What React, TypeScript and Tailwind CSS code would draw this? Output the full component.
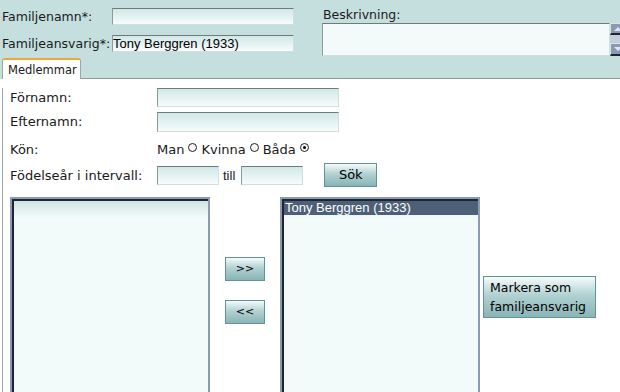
import React from "react";

const field =
  "border border-t-[#6f7b7b] border-l-[#8e9a9a] border-r-[#d4dede] border-b-[#d4dede] bg-linear-to-b from-[#d2e7e7] to-[#f6fcfc]";

const btn =
  "border border-[#5f9595] bg-linear-to-b from-[#f6fbfb] via-[#b2d1d2] via-45% to-[#8ab4b7] text-black";

function Radio({ checked = false }: { checked?: boolean }) {
  return (
    <span className="relative -top-[3px] mx-[4px] inline-flex h-[9px] w-[9px] shrink-0 items-center justify-center rounded-full border-[1.5px] border-[#222] bg-[#f6f6f6]">
      {checked && <span className="h-[3px] w-[3px] rounded-full bg-black" />}
    </span>
  );
}

function ListBox({ items = [] as string[], selected = -1 }) {
  return (
    <div className="h-[220px] w-[200px] shrink-0 border-2 border-[#8a9ab2]">
      <div className="h-full border-t-2 border-l-2 border-[#1e2632] bg-linear-to-b from-[#cfe4e4] from-0% to-[#f3fbfa] to-[8%]">
        {items.map((it, i) => (
          <div
            key={it}
            className={`h-[14px] pl-[1px] font-['Liberation_Sans'] text-[13px] leading-[14px] ${
              i === selected ? "bg-[#4e6078] text-white" : ""
            }`}
          >
            {it}
          </div>
        ))}
      </div>
    </div>
  );
}

export default function App() {
  return (
    <div className="h-[392px] w-[620px] overflow-hidden bg-white font-['DejaVu_Sans',sans-serif] text-[#1a1a1a]">
      <div className="flex h-[79px] flex-col bg-[#c4dfde]">
        <div className="flex h-[58px] overflow-hidden">
          <div className="w-[322px] shrink-0 pl-[2px] text-[12.5px]">
            <div className="mt-[8px] flex h-[17px] items-center">
              <span className="w-[110px] pt-[1px]">Familjenamn*:</span>
              <div className={`h-[17px] w-[182px] ${field}`} />
            </div>
            <div className="mt-[10px] flex h-[17px] items-center">
              <span className="w-[110px] pt-[1px]">Familjeansvarig*:</span>
              <div
                className={`h-[17px] w-[182px] ${field} font-['Liberation_Sans'] text-[13px] leading-[15px] text-black`}
              >
                Tony Berggren (1933)
              </div>
            </div>
          </div>
          <div className="shrink-0 text-[12.5px]">
            <div className="mt-[6px] h-[17px] pl-[1px]">Beskrivning:</div>
            <div className="flex h-[33px] w-[310px]">
              <div className="w-[288px] border border-t-[#6f7b7b] border-l-[#8e9a9a] border-r-[#d4dede] border-b-[#d4dede] bg-[#f3fbfa]" />
              <div className="flex w-[14px] flex-col">
                <div className="flex h-[12px] items-center justify-center border-t border-l border-t-[#dbe3ea] border-l-[#dbe3ea] border-b-2 border-b-[#1e2632] bg-[#8a9ab0]">
                  <span className="h-0 w-0 border-x-[4px] border-b-[4px] border-x-transparent border-b-[#dfe6ee]" />
                </div>
                <div className="flex-1 bg-[#c4ced8]" />
                <div className="flex h-[13px] items-center justify-center border-t border-l border-t-[#dbe3ea] border-l-[#dbe3ea] border-b-2 border-b-[#1e2632] bg-[#8a9ab0]">
                  <span className="h-0 w-0 border-x-[4px] border-t-[4px] border-x-transparent border-t-[#dfe6ee]" />
                </div>
              </div>
            </div>
          </div>
        </div>
        <div className="flex h-[21px] items-end pl-[2px]">
          <div className="h-[21px] w-[79px] rounded-t-[3px] border-x border-t-2 border-x-[#9aa7a7] border-t-[#f0a636] bg-white pl-[5px] pt-[4px] text-[11.5px] leading-[13px]">
            Medlemmar
          </div>
          <div className="h-px flex-1 bg-[#8f9c9c]" />
        </div>
      </div>

      <div className="ml-[2px] h-[313px] border-l border-[#9aa7a7] pl-[7px] text-[13px]">
        <div className="mt-[9px] flex h-[19px] items-center">
          <span className="w-[147px]">Förnamn:</span>
          <div className={`h-[19px] w-[182px] ${field}`} />
        </div>
        <div className="mt-[5px] flex h-[20px] items-center">
          <span className="w-[147px]">Efternamn:</span>
          <div className={`h-[20px] w-[182px] ${field}`} />
        </div>
        <div className="mt-[6px] flex h-[24px] items-center">
          <span className="w-[147px]">Kön:</span>
          <span className="flex items-center">
            Man
            <Radio />
            Kvinna
            <Radio />
            Båda
            <Radio checked />
          </span>
        </div>
        <div className="mt-[1px] flex h-[24px] items-center">
          <span className="w-[147px] pt-[2px]">Födelseår i intervall:</span>
          <div className={`h-[19px] w-[62px] ${field}`} />
          <span className="ml-[4px] mr-[6px] pt-[2px] font-['Liberation_Sans']">till</span>
          <div className={`h-[19px] w-[62px] ${field}`} />
          <button className={`ml-[21px] h-[24px] w-[53px] ${btn} text-[13px]`}>
            Sök
          </button>
        </div>

        <div className="mt-[10px] flex items-start">
          <ListBox />
          <div className="ml-[15px] flex w-[40px] shrink-0 flex-col pt-[60px]">
            <button className={`h-[24px] w-[40px] ${btn} text-[11px]`}>&gt;&gt;</button>
            <button className={`mt-[19px] h-[24px] w-[40px] ${btn} text-[11px]`}>&lt;&lt;</button>
          </div>
          <div className="ml-[15px] shrink-0">
            <ListBox items={["Tony Berggren (1933)"]} selected={0} />
          </div>
          <button
            className={`ml-[3px] mt-[79px] h-[42px] w-[113px] shrink-0 ${btn} pl-[6px] text-left text-[12.5px] leading-[19px]`}
          >
            Markera som
            <br />
            familjeansvarig
          </button>
        </div>
      </div>
    </div>
  );
}
